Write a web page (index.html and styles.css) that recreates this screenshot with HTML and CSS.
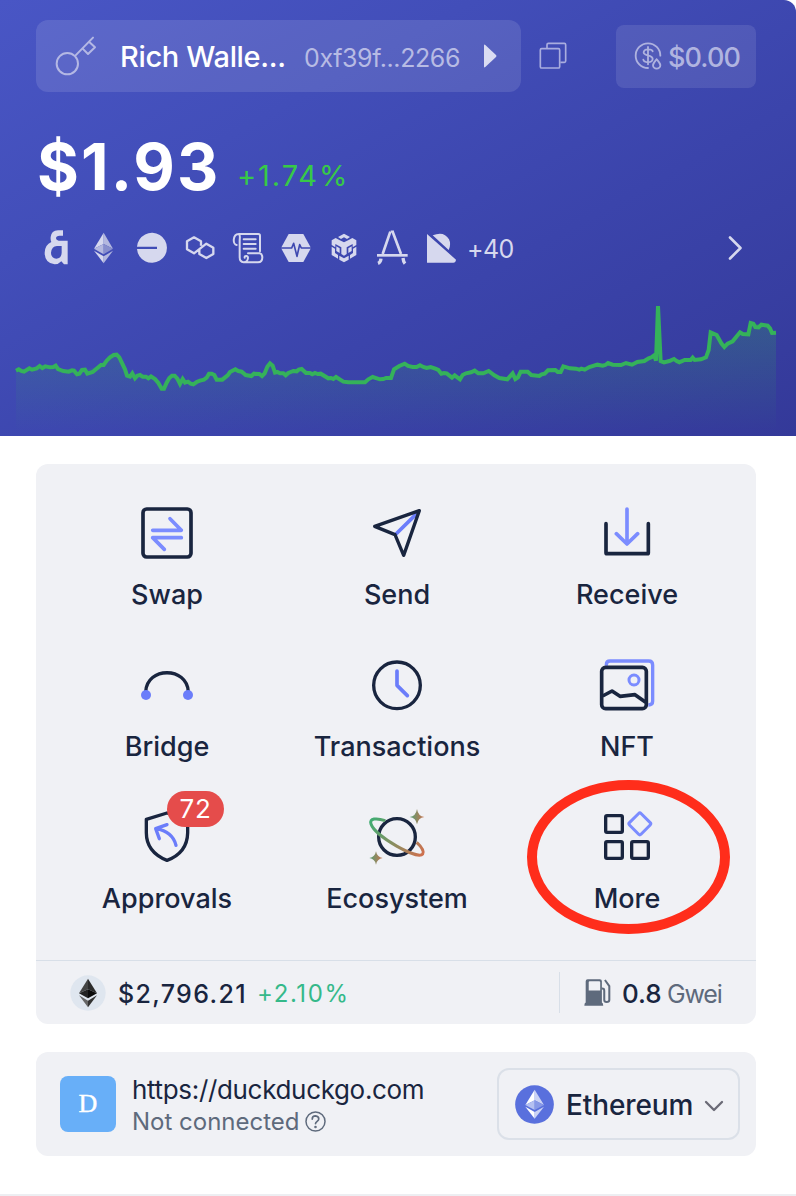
FILE: index.html
```html
<!DOCTYPE html>
<html lang="en">
<head>
<meta charset="utf-8">
<title>Wallet</title>
<link rel="stylesheet" href="styles.css">
</head>
<body>
<div class="popup">
  <header class="hero">
    <div class="topbar">
      <div class="account">
        <svg class="key" viewBox="165 105 126 126" fill="none" stroke="#b4b8e4" stroke-width="6"><circle cx="202" cy="191" r="32"/><path d="M226 167L279 113M267 125L285 142L264 162L248 146" stroke-linecap="round" stroke-linejoin="round"/></svg>
        <span class="account-name">Rich Walle...</span>
        <span class="account-addr">0xf39f...2266</span>
        <svg class="play" viewBox="0 0 14 24"><path d="M1 1.5Q1 0 2.3 1L13 11Q14 12 13 13L2.3 23Q1 24 1 22.500Z" fill="#dadcf2"/></svg>
      </div>
      <svg class="copy" viewBox="429 127 84 84" fill="none" stroke="#a9addf" stroke-width="5"><rect x="433" y="147" width="58" height="58" rx="4"/><path d="M453 145V135Q453 131 457 131H505Q509 131 509 135V184Q509 188 505 188H493"/></svg>
      <div class="gas-box">
        <svg class="coin" viewBox="714 126 84 84" fill="none" stroke="#aeb2df" stroke-width="5.500" stroke-linecap="round"><path d="M756 204A37 37 0 1 1 793 167"/><path d="M770 154C768 146 744 145 743 157C742 169 770 163 770 177C769 190 744 189 742 179M756 141V193"/><path d="M782 178C777 184 771 190 771 196A11 10 0 0 0 793 196C793 190 787 184 782 178Z"/></svg>
        <span>$0.00</span>
      </div>
    </div>
    <div class="balance"><span class="amount">$1.93</span><span class="change">+1.74%</span></div>
    <div class="chains">
      <svg viewBox="117 333 102 102"><path fill="#d6d8ee" fill-rule="evenodd" d="M189 331V347H179Q168 347 168 355Q168 361 176 362H203V433H192L184 424Q176 433 164 433Q134 430 134 398Q135 374 154 366Q151 361 152 351Q154 332 174 331ZM185 378V398Q184 416 169 416Q153 414 153 398Q155 379 171 378Z"/></svg>
      <svg viewBox="261 333 102 102"><path fill="#d6d8ee" d="M311 338L282 386L311 372Z"/><path fill="#b4b8df" d="M311 338L339 386L311 372Z"/><path fill="#b4b8df" d="M282 386L311 372V403Z"/><path fill="#888fcd" d="M339 386L311 372V403Z"/><path fill="#d6d8ee" d="M282 392L311 409V430Z"/><path fill="#b4b8df" d="M339 392L311 409V430Z"/></svg>
      <svg viewBox="405 333 102 102"><path fill="#d6d8ee" d="M411 380A45 45 0 1 1 411 387H471V380Z"/></svg>
      <svg viewBox="549 333 102 102" fill="none" stroke="#d6d8ee" stroke-width="7" stroke-linejoin="round"><path d="M603 377V364L582 352L561 364V388L582 400L619 371L640 383V402L619 414L598 402V389"/></svg>
      <svg viewBox="693 333 102 102" fill="none" stroke="#d6d8ee" stroke-width="6" stroke-linecap="round" stroke-linejoin="round"><path d="M710 375C698 374 697 343 716 342H775Q780 342 780 347V394M716 342C722 344 719 355 719 363V412C719 431 742 431 744 414C744 407 733 405 734 413M744 400H779Q787 402 787 412Q787 427 774 427H732M731 358H767M731 372H767M731 386H767"/></svg>
      <svg viewBox="837 333 102 102"><path fill="#d6d8ee" d="M866 342H910L933 384L910 426H866L843 384Z"/><path fill="none" stroke="#3f48b0" stroke-width="5" stroke-linejoin="round" d="M842 384H875L881 370L891 409L899 374L904 384H935"/></svg>
      <svg viewBox="981 333 102 102" fill="#d6d8ee"><path d="M1032 341L1050 351L1041 357L1032 352L1023 357L1014 351ZM1007 354L1018 360L1032 367L1046 360L1057 354L1069 361V375L1058 382V372L1040 382V402L1032 407L1024 402V382L1006 372V382L995 375V361ZM995 380L1005 386V399L1014 405V416L995 405ZM1069 380L1059 386V399L1050 405V416L1069 405ZM1009 379L1019 385V399L1009 393ZM1055 379L1045 385V399L1055 393ZM1018 407L1032 415L1046 407V419L1032 427L1018 419Z"/></svg>
      <svg viewBox="1125 333 102 102" fill="none" stroke="#d6d8ee"><path stroke-width="8" d="M1148 402L1171 335M1178 335L1203 402"/><path stroke-width="5" d="M1172 334H1182"/><path stroke-width="8" d="M1131 406H1223"/><path stroke-width="10" d="M1143 416Q1142 427 1134 430M1209 414Q1210 425 1215 431"/></svg>
      <svg viewBox="81 63 102 102" fill="#d6d8ee"><path d="M93 72L180 149Q179 158 172 158H93ZM110 76Q144 62 159 88Q166 103 158 120Z"/></svg>
      <span class="more-chains">+40</span>
      <svg class="next" viewBox="0 0 14 24" fill="none" stroke="#d6d8ee" stroke-width="2.600" stroke-linecap="round" stroke-linejoin="round"><path d="M2 1.500L12.500 12L2 22.500"/></svg>
    </div>
    <svg class="chart" viewBox="0 30 2388 408">
      <defs>
        <linearGradient id="area" x1="0" y1="60" x2="0" y2="425" gradientUnits="userSpaceOnUse"><stop offset="0" stop-color="#34b256" stop-opacity=".26"/><stop offset="1" stop-color="#34b256" stop-opacity="0"/></linearGradient>
      </defs>
      <path fill="url(#area)" d="M48 425V242L119 230L167 229L190 243L231 250L303 225L341 195L358 202L381 257L453 259L488 296L516 257L540 280L580 283L627 251L650 269L706 238L754 258L786 258L810 220L825 248L905 237L962 251L1030 275L1095 277L1173 264L1182 238L1214 221L1306 236L1380 268L1424 242L1466 243L1522 268L1562 245L1618 258L1690 229L1754 239L1824 219L1896 224L1963 196L1968 212L1974 48L1982 213L2118 202L2132 127L2150 135L2173 171L2220 127L2245 133L2252 99L2303 107L2316 129L2328 128V425Z"/>
      <path fill="none" stroke="#35b25a" stroke-width="12" d="M48 242L56 238L64 243L72 245L88 235L96 239L110 235L119 228L127 234L136 229L150 232L160 231L167 227L174 237L190 243L206 245L216 241L222 242L231 253L238 251L246 240L255 239L262 251L278 246L303 225L311 225L320 212L330 202L341 195L350 194L358 202L375 238L381 257L390 260L397 250L405 265L412 257L420 255L428 260L438 260L445 265L453 259L465 267L475 279L485 296L492 296L500 278L508 264L516 257L524 257L532 266L540 282L548 267L555 278L564 275L572 281L580 283L590 276L600 272L612 269L620 263L627 251L635 251L643 255L650 269L667 269L683 256L690 246L706 238L715 243L725 245L737 255L754 258L762 251L778 252L786 258L794 250L802 230L810 220L818 227L825 248L832 246L840 250L850 250L857 256L865 249L880 243L890 244L896 239L905 237L918 249L930 249L937 253L945 249L953 252L962 251L985 265L993 264L1000 267L1008 261L1030 275L1045 277L1095 277L1105 268L1118 261L1140 268L1150 267L1158 264L1173 264L1182 238L1198 228L1214 221L1224 228L1238 231L1250 231L1260 226L1270 231L1280 234L1292 231L1306 236L1315 240L1324 251L1332 249L1340 250L1356 263L1364 256L1380 268L1388 255L1398 250L1413 247L1424 242L1435 250L1450 250L1466 243L1483 256L1498 264L1522 268L1538 250L1546 267L1554 262L1562 245L1583 245L1594 255L1618 258L1625 253L1634 251L1644 241L1666 240L1673 246L1682 246L1690 229L1710 235L1728 236L1738 239L1744 236L1754 239L1768 231L1792 224L1808 227L1816 225L1824 219L1838 224L1863 225L1878 219L1896 224L1912 216L1933 213L1946 205L1956 201L1963 196L1968 212L1974 48L1982 213L1992 217L2008 213L2022 207L2030 213L2038 217L2054 210L2072 210L2078 203L2084 210L2103 208L2118 202L2126 180L2132 127L2150 135L2164 160L2173 171L2183 161L2198 154L2220 127L2228 132L2245 133L2252 99L2260 101L2266 111L2276 112L2284 104L2303 107L2310 115L2316 129L2328 128"/>
    </svg>
  </header>

  <main class="content">
    <section class="card">
      <div class="actions">
        <div class="action"><svg viewBox="111 39 180 180" fill="none" stroke="#19253f" stroke-width="11" stroke-linecap="round" stroke-linejoin="round"><rect x="129" y="57" width="144" height="144" rx="11"/><path stroke="#7b8cff" d="M158 121H244L210 86M244 143H158L193 178"/></svg><span>Swap</span></div>
        <div class="action"><svg viewBox="801 39 180 180" fill="none" stroke-width="11" stroke-linecap="round" stroke-linejoin="round"><path stroke="#6b7dfa" d="M888 132L948 73"/><path stroke="#19253f" stroke-width="10" d="M824 109L958 62L911 196L885 134Z"/></svg><span>Send</span></div>
        <div class="action"><svg viewBox="111 39 180 180" fill="none" stroke="#19253f" stroke-width="11" stroke-linecap="round" stroke-linejoin="round"><path d="M138 101V188Q138 191 141 191H262Q265 191 265 188V101"/><path stroke="#7b8cff" d="M201 57V162M169 131L201 162L233 131"/></svg><span>Receive</span></div>
        <div class="action"><svg viewBox="111 45 180 180" fill="none"><path stroke="#19253f" stroke-width="10" d="M137 156C140 79 262 79 265 156"/><circle cx="138" cy="165" r="15" fill="#6b7dfa"/><circle cx="264" cy="165" r="15" fill="#6b7dfa"/></svg><span>Bridge</span></div>
        <div class="action"><svg viewBox="801 45 180 180" fill="none" stroke="#19253f" stroke-width="10" stroke-linecap="round" stroke-linejoin="round"><circle cx="891" cy="136" r="70"/><path stroke="#6b7dfa" stroke-width="11" d="M891 93V136L922 167"/></svg><span>Transactions</span></div>
        <div class="action"><svg viewBox="111 495 180 180" fill="none" stroke="#19253f" stroke-width="11" stroke-linejoin="round"><path stroke="#7b8cff" stroke-width="10" d="M139 527V524Q139 513 150 513H266Q278 513 278 525V634Q278 645 265 645"/><rect x="125" y="532" width="134" height="124" rx="12"/><path d="M128 618L156 603L180 619L225 614L257 637"/><circle cx="222" cy="570" r="15" stroke="#7b8cff" stroke-width="9"/></svg><span>NFT</span></div>
        <div class="action"><div class="badged"><svg viewBox="141 81 180 180" fill="none" stroke="#19253f" stroke-width="10" stroke-linecap="round" stroke-linejoin="round"><path d="M231 99L293 118V158Q292 218 231 241Q169 216 169 158V118Z"/><path stroke="#6b7dfa" d="M258 196Q248 155 198 146M231 134L197 146L208 176"/></svg><b class="badge">72</b></div><span>Approvals</span></div>
        <div class="action"><svg viewBox="831 81 180 180" fill="none"><defs><linearGradient id="orbit" x1="840" y1="120" x2="1000" y2="225" gradientUnits="userSpaceOnUse"><stop stop-color="#3fad73"/><stop offset="1" stop-color="#d0704e"/></linearGradient><linearGradient id="spark"><stop offset=".1" stop-color="#5d9b70"/><stop offset="1" stop-color="#cc734f"/></linearGradient></defs><circle cx="921" cy="171" r="55" stroke="#19253f" stroke-width="10"/><path stroke="url(#orbit)" stroke-width="9" d="M886 122C859 113 837 115 843 132C856 170 984 241 998 222C1003 213 992 198 980 187"/><path fill="url(#spark)" d="M981 87Q984 108 1003 111Q984 114 981 133Q978 114 959 111Q978 108 981 87Z"/><path fill="url(#spark)" d="M858 214Q861 231 878 234Q861 237 858 254Q855 237 838 234Q855 231 858 214Z"/></svg><span>Ecosystem</span></div>
        <div class="action"><svg viewBox="261 111 180 180" fill="none" stroke="#19253f" stroke-width="10"><rect x="287" y="137" width="50" height="50" rx="4"/><rect x="287" y="215" width="50" height="50" rx="4"/><rect x="365" y="215" width="50" height="50" rx="4"/><rect x="365" y="137" width="49" height="49" rx="5" stroke="#7b8cff" stroke-width="9" transform="rotate(45 389.500 161.500)"/></svg><span>More</span></div>
        <i class="highlight"></i>
      </div>
      <div class="market">
        <svg class="eth-mark" viewBox="120 105 108 108"><circle cx="174" cy="159" r="53" fill="#dfe6ef"/><path fill="#444" d="M174 116L147 160L174 148Z"/><path fill="#2b2b2b" d="M174 116L201 160L174 148Z"/><path fill="#222" d="M147 160L174 148V175Z"/><path fill="#0b0b0b" d="M201 160L174 148V175Z"/><path fill="#666" d="M147 166L174 182V202Z"/><path fill="#333" d="M201 166L174 182V202Z"/></svg>
        <span class="price">$2,796.21</span><span class="rise">+2.10%</span>
        <div class="fee">
          <svg class="pump" viewBox="552 116 80 80" fill="none" stroke="#5e6a7c" stroke-width="6"><path fill="#5e6a7c" stroke="none" fill-rule="evenodd" d="M557 186V123Q557 117 563 117H599Q605 117 605 123V186Q609 187 609 195H553Q553 187 557 186ZM569 123Q566 123 566 126V150H600V126Q600 123 597 123Z"/><path d="M604 144Q612 143 612 151V178Q612 184 619 184Q627 184 627 178V137L614 119" stroke-linejoin="round"/></svg>
          <span class="fee-value">0.8</span><span class="fee-unit">Gwei</span>
        </div>
      </div>
    </section>

    <section class="site">
      <div class="favicon">D</div>
      <div class="site-text">
        <div class="url">https://duckduckgo.com</div>
        <div class="status"><span>Not connected</span><svg viewBox="823 512 64 64" fill="none" stroke="#5e6a7c" stroke-width="4.500"><circle cx="855" cy="544" r="29"/><path stroke-width="5" stroke-linecap="round" d="M845 537Q845 527 855 527Q865 528 865 536C865 543 855 544 855 551"/><circle cx="855" cy="561" r="1.700"/></svg></div>
      </div>
      <div class="network">
        <svg class="eth-badge" viewBox="346 433 117 117"><circle cx="404.500" cy="491.500" r="58" fill="#5970dd"/><path fill="#fff" d="M405 447L377 493L405 479Z"/><path fill="#cbd3f5" d="M405 447L433 493L405 479Z"/><path fill="#b4c0f1" d="M377 493L405 479V508Z"/><path fill="#8799e7" d="M433 493L405 479V508Z"/><path fill="#fff" d="M377 498L405 514V534Z"/><path fill="#cbd3f5" d="M433 498L405 514V534Z"/></svg>
        <span>Ethereum</span>
        <svg class="chevron" viewBox="0 0 20 12" fill="none" stroke="#6a6a76" stroke-width="2.300" stroke-linecap="round" stroke-linejoin="round"><path d="M2 2L10 10L18 2"/></svg>
      </div>
    </section>
  </main>
  <footer class="edge"></footer>
</div>
</body>
</html>
```
FILE: styles.css
```css
* { box-sizing: border-box; }
body { margin: 0; background: #fff; font-family: Inter, "Liberation Sans", sans-serif; color: #19253f; }
svg { display: block; flex: none; overflow: visible; }
span { white-space: nowrap; }
.popup { width: 796px; height: 1196px; display: flex; flex-direction: column; overflow: hidden; }

.hero { height: 436px; flex: none; display: flex; flex-direction: column; border-top-right-radius: 12px; background: linear-gradient(151deg, #4956c5 0%, #424eb9 30%, #3b44ab 62%, #343999 100%); }
.topbar { display: flex; align-items: center; padding: 20px 40px 0 36px; height: 92px; flex: none; }
.account { width: 485px; height: 72px; display: flex; align-items: center; border-radius: 12px; background: rgba(255,255,255,.115); padding-left: 19px; }
.key { width: 42px; height: 42px; }
.account-name { width: 166px; margin-left: 23px; font-size: 29px; font-weight: 500; letter-spacing: -.34px; color: #fff; padding-top: 1px; }
.account-addr { margin-left: 18px; width: 157px; font-size: 25px; letter-spacing: -.38px; color: #b7bbe4; padding-top: 4px; }
.play { width: 14px; height: 24px; margin-left: 22px; }
.copy { width: 28px; height: 28px; margin-left: 18px; }
.gas-box { width: 140px; height: 63px; margin-left: auto; display: flex; align-items: center; gap: 6px; padding-left: 18px; border-radius: 8px; background: rgba(255,255,255,.1); font-size: 27px; font-weight: 500; letter-spacing: -.9px; color: #b0b4e0; }
.gas-box span { padding-top: 2px; }
.coin { width: 28px; height: 28px; }

.balance { height: 108px; flex: none; display: flex; align-items: baseline; padding: 36px 0 0 37px; }
.amount { font-size: 64px; line-height: 78px; font-weight: 700; letter-spacing: 2.1px; color: #fff; width: 200px; }
.change { position: relative; top: -4px; font-size: 29px; letter-spacing: 1.9px; color: #37c947; }

.chains { display: flex; align-items: center; height: 96px; flex: none; padding-left: 39px; gap: 14px; }
.chains svg { width: 34px; height: 34px; }
.more-chains { font-size: 25px; letter-spacing: -.6px; color: #d6d8ee; margin-left: -4px; padding-top: 2px; }
.chains .next { width: 14px; height: 24px; margin: 0 54px 0 auto; }
.chart { width: 796px; height: 136px; margin-top: 4px; }

.content { padding: 28px 40px 0 36px; display: flex; flex-direction: column; gap: 28px; }
.card { height: 560px; border-radius: 12px; background: #f0f1f5; }
.actions { position: relative; height: 496px; display: grid; grid-template-columns: repeat(3, 230px); grid-auto-rows: 152px; padding: 39px 0 0 16px; }
.action { display: flex; flex-direction: column; align-items: center; font-size: 27px; font-weight: 550; line-height: 34px; }
.action > svg, .badged svg { width: 60px; height: 60px; }
.action > span { margin-top: 15px; }
.badged { position: relative; }
.badge { position: absolute; left: 30px; top: -16px; width: 57px; height: 36px; border-radius: 18px; background: #e54c4b; color: #fff; font-size: 26px; font-weight: 400; letter-spacing: .8px; text-align: center; line-height: 36px; }
.highlight { position: absolute; left: 491px; top: 316px; width: 203px; height: 154px; border: 10px solid #ff2d1b; border-radius: 50%; }

.market { height: 64px; border-top: 1px solid #d8dfe8; display: flex; align-items: center; padding-left: 34px; }
.market span { padding-top: 2px; }
.eth-mark { width: 36px; height: 36px; }
.price { width: 130px; margin-left: 12px; font-size: 25px; font-weight: 550; letter-spacing: 1.35px; }
.rise { margin-left: 9px; font-size: 24px; letter-spacing: 1.6px; color: #35b98a; }
.fee { margin-left: auto; width: 197px; height: 41px; border-left: 1px solid #d8dfe8; display: flex; align-items: center; padding-left: 24px; }
.pump { width: 27px; height: 27px; }
.fee-value { width: 40px; margin-left: 11px; font-size: 26px; font-weight: 550; }
.fee-unit { margin-left: 5px; font-size: 25px; letter-spacing: -1.2px; color: #5e6a7c; }

.site { height: 104px; border-radius: 12px; background: #f0f1f5; display: flex; align-items: center; padding: 0 16px 0 24px; }
.favicon { width: 56px; height: 56px; border-radius: 8px; background: #68aff8; color: #fff; font: 26px/56px "Liberation Serif", serif; text-align: center; -webkit-text-stroke: .4px #fff; }
.site-text { margin-left: 16px; padding-top: 2px; }
.url { font-size: 26px; line-height: 34px; letter-spacing: -.33px; }
.status { display: flex; align-items: center; gap: 5px; font-size: 24px; line-height: 30px; color: #5e6a7c; }
.status svg { width: 21px; height: 21px; margin-top: -2px; }
.network { margin-left: auto; width: 243px; height: 72px; border: 2px solid #dbe0e8; border-radius: 12px; display: flex; align-items: center; padding-left: 16px; font-size: 28px; font-weight: 550; letter-spacing: -.1px; }
.eth-badge { width: 39px; height: 39px; }
.network span { width: 128px; margin-left: 12px; padding-top: 2px; }
.chevron { width: 20px; height: 12px; margin: 3px 0 0 10px; }
.edge { height: 2px; margin-top: auto; background: #edeef2; }
```
